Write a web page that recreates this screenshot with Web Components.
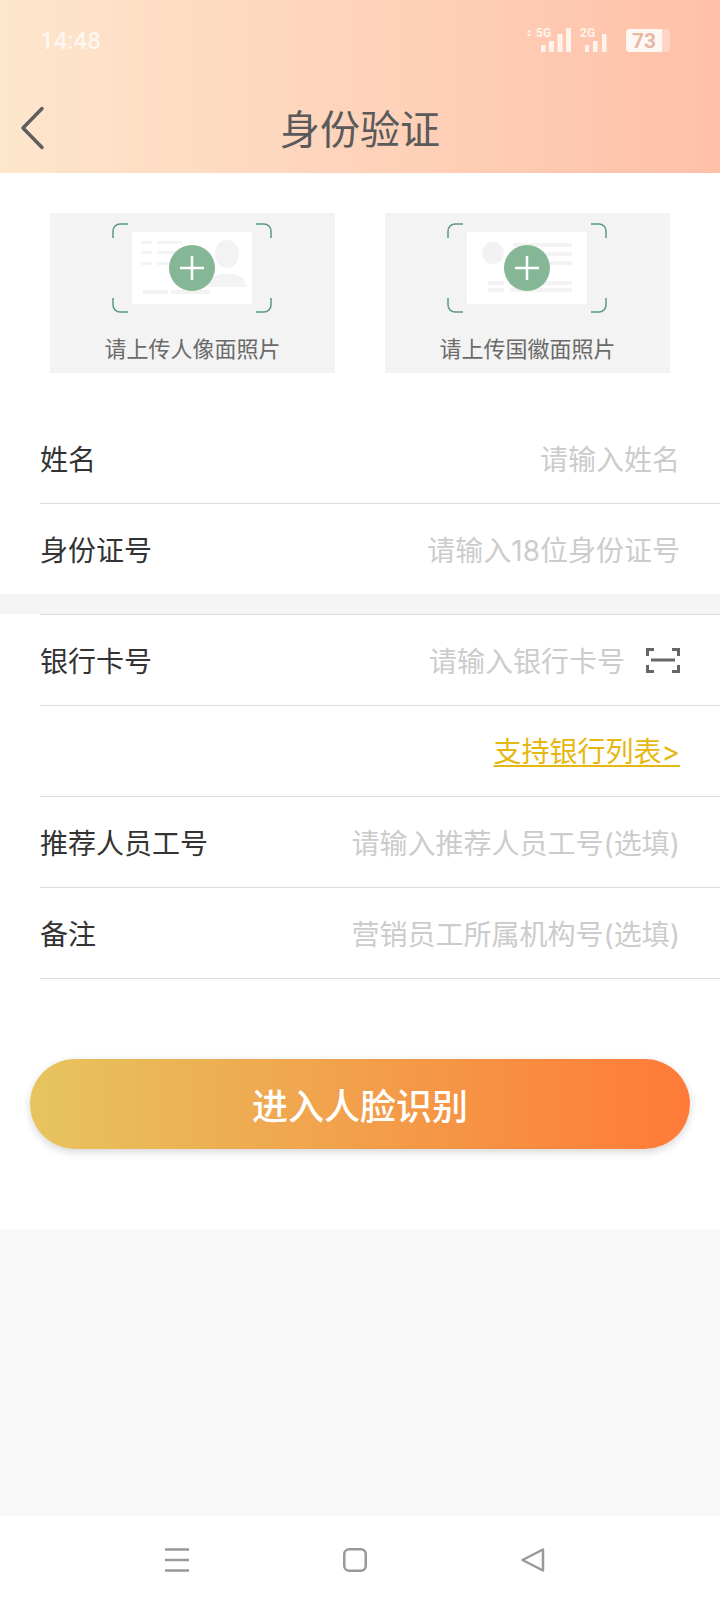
<!DOCTYPE html>
<html lang="zh"><head><meta charset="utf-8"><title>身份验证</title>
<style>
html,body{margin:0;padding:0;height:1604px;overflow:hidden;background:#f8f8f8;font-family:"Noto Sans CJK SC","Noto Sans",sans-serif}
</style></head>
<body>
<app-page></app-page>
<script>
const FONT='"Noto Sans CJK SC","Noto Sans",sans-serif';
const FORM='Inter,"Noto Sans CJK SC","Noto Sans",sans-serif';
function def(name,html){
  customElements.define(name,class extends HTMLElement{
    connectedCallback(){
      if(this.shadowRoot)return;
      this.attachShadow({mode:'open'}).innerHTML=typeof html==='function'?html(this):html;
    }
  });
}
def('status-bar',`<style>
:host{display:flex;height:82px;align-items:center;justify-content:space-between;padding:0 50px 0 40px;box-sizing:border-box}
.t{font:500 24px Roboto,sans-serif;color:rgba(255,255,255,.72)}
svg{display:block}
text{font-family:Roboto,sans-serif;font-weight:700}
</style>
<span class="t">14:48</span>
<svg width="144" height="30" viewBox="526 27 144 30">
 <g fill="#fff" fill-opacity=".78">
  <path d="M527 33.500l2-3 2 3zM527 35h4l-2 3z"/>
  <text x="536" y="38" font-size="12">5G</text>
  <rect x="541" y="46" width="4.500" height="7"/><rect x="549" y="42" width="5" height="11"/><rect x="557.500" y="35" width="5" height="18"/><rect x="566" y="29" width="5" height="24"/>
  <text x="580" y="38" font-size="12">2G</text>
  <rect x="585" y="46" width="4" height="7"/><rect x="593" y="42" width="4.500" height="11"/><rect x="602" y="35" width="4.500" height="18"/>
 </g>
 <path d="M630 30h36a4 4 0 0 1 4 4v15a4 4 0 0 1-4 4h-36a4 4 0 0 1-4-4v-15a4 4 0 0 1 4-4z" fill="#fff" fill-opacity=".3"/>
 <path d="M630 30h32v23h-32a4 4 0 0 1-4-4v-15a4 4 0 0 1 4-4z" fill="#fff" fill-opacity=".8"/>
 <text x="644" y="49" font-size="21" font-weight="500" text-anchor="middle" fill="#e8b8a4">73</text>
</svg>`);
def('title-bar',`<style>
:host{display:flex;height:91px;align-items:center;justify-content:center;position:relative}
h1{margin:0 0 2px;font:400 40px/1 ${FONT};color:#5a5a5a}
svg{position:absolute;left:18px;top:23px}
</style>
<svg width="30" height="46" viewBox="0 0 30 46" fill="none" stroke="#5e5e5e" stroke-width="3.500" stroke-linecap="round" stroke-linejoin="round"><path d="M24 3.500L5 23l19 19.500"/></svg>
<h1><slot></slot></h1>`);
def('upload-card',h=>{
 const back=h.hasAttribute('back');
 const art=back?`
  <circle cx="46" cy="30" r="11" fill="#f2f2f2"/>
  <g fill="#f3f3f3"><rect x="66" y="20" width="59" height="4"/><rect x="66" y="29" width="59" height="4"/><rect x="66" y="38" width="59" height="4"/>
  <rect x="41" y="58" width="16" height="4"/><rect x="63" y="58" width="62" height="4"/><rect x="41" y="65" width="16" height="4"/><rect x="63" y="65" width="62" height="4"/></g>`:`
  <g fill="#f3f3f3"><rect x="29" y="18" width="11" height="3"/><rect x="45" y="18" width="25" height="3"/><rect x="29" y="28" width="11" height="3"/><rect x="45" y="28" width="25" height="3"/><rect x="29" y="39" width="11" height="3"/><rect x="45" y="39" width="25" height="3"/>
  <rect x="31" y="67" width="25" height="4"/><rect x="59" y="67" width="39" height="4"/>
  <ellipse cx="115" cy="31" rx="12" ry="14"/><path d="M95 64l4-9 9-4h14l9 4 4 9z"/></g>`;
 return `<style>
:host{display:flex;flex-direction:column;align-items:center;width:285px;height:160px;background:#f3f3f3;padding-top:10px;box-sizing:border-box}
svg{display:block;align-self:flex-start;margin-left:62px}
span{font:400 22px/1 ${FONT};color:#6a6a6a;margin-top:23px}
</style>
<svg width="160" height="90" viewBox="0 0 160 90" fill="none">
 <rect x="20" y="9" width="120" height="72" rx="2" fill="#fff"/>
 ${art}
 <g stroke="#5c9a7c" stroke-width="1.500"><path d="M16 1H8a7 7 0 0 0-7 7v7M144 1h8a7 7 0 0 1 7 7v7M16 89H8a7 7 0 0 1-7-7v-7M144 89h8a7 7 0 0 0 7-7v-7"/></g>
 <circle cx="80" cy="45" r="23" fill="#85b797"/>
 <path d="M68 45h24M80 33v24" stroke="#fff" stroke-width="2.500"/>
</svg>
<span><slot></slot></span>`});
def('form-row',h=>`<style>
:host{display:flex;align-items:center;justify-content:space-between;height:90px;margin-left:40px;padding-right:40px;border-bottom:1px solid #dcdcdc;font:400 28px/1 ${FORM};color:#333;box-sizing:content-box}
:host([plain]){border-bottom:0}
:host([top]){border-top:1px solid #dcdcdc}
.l,.v{padding-top:4px}
.r{display:flex;align-items:center;gap:21px;color:#ccc}
</style>
<span class="l">${h.getAttribute('label')||''}</span>
<span class="r"><span class="v"><slot></slot></span><slot name="extra"></slot></span>`);
def('scan-icon',`<style>:host{display:block;width:34px;height:25px}svg{display:block}</style>
<svg width="34" height="25" viewBox="0 0 34 25" fill="none" stroke="#666" stroke-width="3"><path d="M1.500 8V1.500H8M26 1.500h6.500V8M1.500 17v6.500H8M26 23.500h6.500V17"/><path d="M5 12h24" stroke-width="3"/></svg>`);
def('bank-link',`<style>
:host{display:flex;justify-content:flex-end;align-items:center;height:90px;margin-left:40px;padding-right:40px;border-bottom:1px solid #dcdcdc}
a{font:400 28px/1.15 ${FORM};color:#e6b70f;text-decoration:underline;text-underline-offset:3px;padding-top:2px}
</style><a><slot></slot></a>`);
def('primary-button',`<style>
:host{display:flex;align-items:center;justify-content:center;height:90px;margin:80px 30px;border-radius:45px;background:linear-gradient(90deg,#e6c45e,#ff7a38);box-shadow:0 3px 8px rgba(0,0,0,.16);color:#fff;font:500 36px/1 ${FONT}}
</style><slot></slot>`);
def('nav-bar',`<style>
:host{display:flex;height:88px;background:#fff;justify-content:center;padding:32px 10px 0 0;box-sizing:border-box;gap:154px}
svg{display:block}
</style>
<svg width="24" height="24" viewBox="0 0 24 24" fill="none" stroke="#999" stroke-width="2.500"><path d="M0 1.500h24M0 12h24M0 22.500h24"/></svg>
<svg width="24" height="24" viewBox="0 0 24 24" fill="none" stroke="#999" stroke-width="2.500"><rect x="1.250" y="1.250" width="21.500" height="21.500" rx="5"/></svg>
<svg width="24" height="24" viewBox="0 0 24 24" fill="none" stroke="#999" stroke-width="2.500" stroke-linejoin="round"><path d="M22 1.500v21L1.500 12z"/></svg>`);
def('app-page',`<style>
:host{display:flex;flex-direction:column;height:1604px;background:#f8f8f8}
header{background:linear-gradient(90deg,#fde6cd,#ffc0a8);height:173px}
main{background:#fff}
.cards{display:flex;justify-content:space-between;padding:40px 50px}
.gap{height:20px;background:#f5f5f5}
.fill{flex:1}
</style>
<header><status-bar></status-bar><title-bar>身份验证</title-bar></header>
<main>
 <section class="cards"><upload-card>请上传人像面照片</upload-card><upload-card back>请上传国徽面照片</upload-card></section>
 <form-row label="姓名">请输入姓名</form-row>
 <form-row label="身份证号" plain>请输入18位身份证号</form-row>
 <div class="gap"></div>
 <form-row label="银行卡号" top>请输入银行卡号<scan-icon slot="extra"></scan-icon></form-row>
 <bank-link>支持银行列表&gt;</bank-link>
 <form-row label="推荐人员工号">请输入推荐人员工号(选填)</form-row>
 <form-row label="备注">营销员工所属机构号(选填)</form-row>
 <primary-button>进入人脸识别</primary-button>
</main>
<div class="fill"></div>
<nav-bar></nav-bar>`);
</script>
</body></html>
